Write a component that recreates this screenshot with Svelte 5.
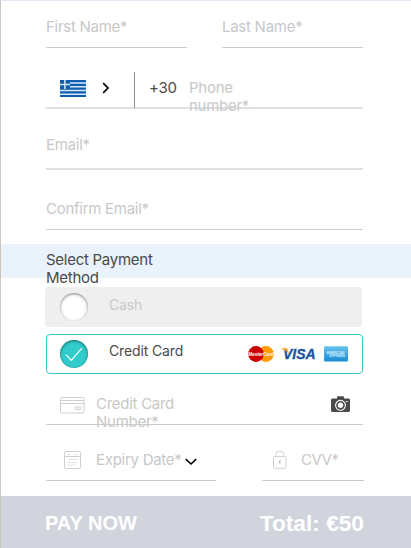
<script>
  let method = $state('card');
</script>

<main>
  <section class="row names">
    <label class="field half"><span>First Name*</span></label>
    <label class="field half"><span>Last Name*</span></label>
  </section>

  <section class="field phone">
    <svg class="flag" width="26" height="17" viewBox="0 0 26 17">
      <rect width="26" height="17" fill="#0d5eaf" />
      <path d="M10 2.9h16M10 6.8h16M0 10.6h26M0 14.2h26" stroke="#d9e8f5" stroke-width="1.5" />
      <path d="M4.9 0v9M0 4.5h10" stroke="#d9e8f5" stroke-width="1.5" />
    </svg>
    <svg class="chevron" width="8" height="12" viewBox="0 0 8 12" fill="none" stroke="#000" stroke-width="1.7"><path d="M1.2 1.2L6 6L1.2 10.8" /></svg>
    <span class="code">+30</span>
    <span class="hint">Phone<br />number*</span>
  </section>

  <section class="field email"><span>Email*</span></section>
  <section class="field confirm"><span>Confirm Email*</span></section>

  <h2>Select Payment<br />Method</h2>

  <button class="option cash" onclick={() => (method = 'cash')}>
    <i class="radio" class:on={method === 'cash'}></i>
    <span>Cash</span>
  </button>

  <button class="option card" onclick={() => (method = 'card')}>
    <i class="radio" class:on={method === 'card'}>
      <svg width="28" height="28" viewBox="0 0 28 28" fill="none" stroke="#fff" stroke-width="1.2"><path d="M6 14.6L11.3 20.3L21.7 8.4" /></svg>
    </i>
    <span>Credit Card</span>
    <svg class="brands" width="102" height="18" viewBox="0 0 102 18">
      <defs>
        <linearGradient id="amex" x2="0" y2="1"><stop stop-color="#69c4ed" /><stop offset="1" stop-color="#168bd4" /></linearGradient>
      </defs>
      <circle cx="19" cy="9" r="7.9" fill="#f90" />
      <circle cx="9" cy="9" r="7.9" fill="#c00" />
      <path d="M14 2.9a7.9 7.9 0 0 1 0 12.2a7.9 7.9 0 0 0 0-12.2" fill="#e96d08" />
      <text x="1.3" y="11.1" textLength="25.2" lengthAdjust="spacingAndGlyphs" class="mc">MasterCard</text>
      <text x="36" y="13.8" textLength="32.6" lengthAdjust="spacingAndGlyphs" class="visa">VISA</text>
      <path d="M34.8 3.3h4.6q1.1 0 1.4 1.3l.9 4.2Q39.5 5 34.8 3.9z" fill="#f5a51d" />
      <rect x="77" y="1.2" width="24" height="15.3" rx="1" fill="url(#amex)" />
      <text x="79.5" y="8.7" textLength="18" lengthAdjust="spacingAndGlyphs" class="ax">AMERICAN</text>
      <text x="82.5" y="12.3" textLength="15.5" lengthAdjust="spacingAndGlyphs" class="ax">EXPRESS</text>
    </svg>
  </button>

  <section class="field number">
    <svg class="cc" width="25" height="17" viewBox="0 0 25 17" fill="none" stroke="#d0d0d0">
      <rect x=".5" y=".5" width="23.5" height="15.5" rx="1" /><path d="M1 3.5h23M1 6.5h23" />
      <rect x="14.8" y="9.8" width="3.5" height="2.8" rx="1.2" /><rect x="17.7" y="9.8" width="3.2" height="2.8" rx="1.2" />
    </svg>
    <span class="hint">Credit Card<br />Number*</span>
    <svg class="camera" width="19" height="17" viewBox="0 0 19 17">
      <path d="M6 2.5V1.5Q6 .3 7 .3h5q1 0 1 1.2v1h4.5Q19 2.5 19 4v10.5q0 1.5-1.5 1.5h-16Q0 16 0 14.5V4q0-1.5 1.5-1.5z" fill="#4a4a4a" />
      <circle cx="9.5" cy="9.3" r="4.9" fill="none" stroke="#fff" stroke-width="1.1" /><circle cx="9.5" cy="9.3" r="2.7" fill="#fff" />
      <path d="M15 5.6h1.6" stroke="#fff" />
    </svg>
  </section>

  <section class="row last">
    <div class="field expiry">
      <svg class="cal" width="17" height="18" viewBox="0 0 17 18" fill="none" stroke="#d0d0d0">
        <rect x=".5" y=".5" width="16" height="17" rx="1.5" /><path d="M1 5.5h15M3.5 3.5h2M11.5 3.5h2" />
        <path d="M5 8.5h9.5M3 11.5h11.5M3 14h9" stroke-dasharray="1.3 1" />
      </svg>
      <span class="w-expiry">Expiry Date*</span>
      <svg class="down" width="12" height="8" viewBox="0 0 12 8" fill="none" stroke="#000" stroke-width="1.6"><path d="M.8 1.2L6 6L11.2 1.2" /></svg>
    </div>
    <div class="field cvv">
      <svg width="14" height="19" viewBox="0 0 14 19" fill="none" stroke="#d0d0d0">
        <rect x=".5" y="6.5" width="12.5" height="11.8" rx="1" /><path d="M3 6.5V4.6q0-3.6 3.8-3.6t3.8 3.6v1.9" /><path d="M5.8 11h2M6.8 11v2.6" stroke="#aaa" stroke-width=".9" />
      </svg>
      <span class="w-cvv">CVV*</span>
    </div>
  </section>

  <footer><strong class="pay">PAY NOW</strong><strong class="total">Total: €50</strong></footer>
</main>

<style>
  main {
    box-sizing: border-box;
    width: 411px;
    height: 548px;
    overflow: hidden;
    border-top: 1px solid #dfeaf5;
    border-left: 1px solid #cbc5be;
    background: #fff;
    font: 15px/18px Inter, "Liberation Sans", sans-serif;
    letter-spacing: -.27px;
    color: #c8c8c8;
    display: flex;
    flex-direction: column;
  }
  span, h2, strong { white-space: nowrap; }
  .row { display: flex; margin-left: 45px; }
  .field { box-sizing: border-box; display: flex; align-items: flex-start; border-bottom: 1px solid #ccc; flex: none; }
  .names { gap: 35px; height: 47px; flex: none; }
  .half { width: 141px; padding-top: 17px; }
  .phone, .email, .confirm, .number { width: 317px; margin-left: 45px; }
  .phone { height: 61px; border-bottom: 2px solid #e0e0e0; }
  .flag { margin: 32px 0 0 14px; }
  .chevron { margin: 34px 0 0 16px; }
  .code { box-sizing: border-box; height: 36px; margin: 24px 0 0 24px; padding: 7px 0 0 14px; border-left: 1px solid #909090; color: #4a4a4a; width: 55px; }
  .phone .hint { padding-top: 31px; }
  .email { height: 61px; padding-top: 27px; border-bottom: 2px solid #e0e0e0; }
  .confirm { height: 60px; padding-top: 30px; }
  h2 { box-sizing: border-box; flex: none; height: 34px; margin: 14px 0 9px; padding: 7px 0 0 45px; background: #eaf2fb; color: #4a4a4a; font-size: 15px; font-weight: 400; }
  .option { box-sizing: border-box; flex: none; display: flex; align-items: center; width: 317px; height: 40px; padding: 0; border: 0; border-radius: 4px; background: #efefef; font: 14px/18px Inter, sans-serif; letter-spacing: -.13px; color: #c8c8c8; text-align: left; }
  .cash { margin-left: 44px; padding: 0 0 0 15px; }
  .card { margin: 7px 0 0 45px; padding-left: 13px; border: 1px solid #35cbc8; background: #fff; color: #4a4a4a; }
  .option span { margin: -5px 0 0 21px; }
  .card span { margin-top: -6px; }
  .radio { width: 28px; height: 28px; flex: none; border-radius: 50%; background: #fff; box-shadow: inset 0 1px 3px rgba(0,0,0,.5); }
  .on { background: #33cccc; }
  .radio svg { display: block; }
  .brands { margin-left: auto; margin-right: 13px; letter-spacing: 0; }
  .mc { font: italic bold 5px "Liberation Sans"; fill: #fff; }
  .visa { font: italic bold 15px "Liberation Sans"; fill: #17559f; stroke: #17559f; stroke-width: .35px; }
  .ax { font: bold 4px "Liberation Sans"; fill: #d3effb; }
  .number { height: 51px; }
  .cc { margin: 23px 0 0 14px; }
  .number .hint { margin: 21px 0 0 11px; }
  .camera { margin: 22px 13px 0 auto; }
  .last { gap: 46px; height: 56px; flex: none; }
  .expiry { width: 170px; }
  .cal { margin: 26px 0 0 18px; }
  .w-expiry { width: 85px; margin: 26px 0 0 15px; }
  .down { margin: 33px 0 0 4px; flex: none; }
  .cvv { width: 102px; }
  .cvv svg { margin: 25px 0 0 11px; }
  .w-cvv { margin: 26px 0 0 14px; letter-spacing: -.5px; }
  footer { box-sizing: border-box; display: flex; justify-content: space-between; align-items: center; height: 52px; flex: none; margin-top: 15px; padding: 0 47px 0 44px; background: #d1d4dd; color: #fff; font-family: "Liberation Sans", sans-serif; letter-spacing: 0; }
  .pay { font-size: 20px; padding-top: 1px; }
  .total { font-size: 22.7px; padding-top: 2px; }
</style>
